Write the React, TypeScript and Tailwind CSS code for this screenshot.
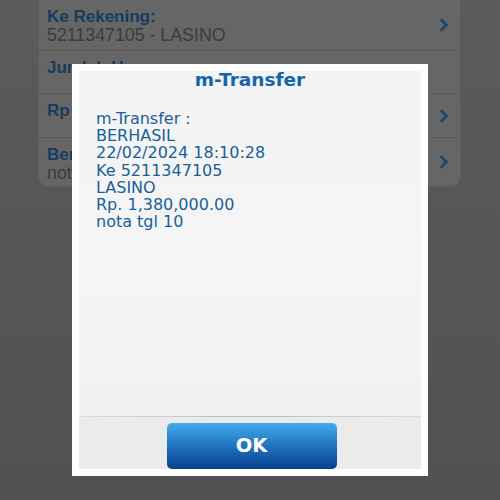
import { ChevronRight } from "lucide-react";

const rows = [
    { label: "Ke Rekening:", value: "5211347105 - LASINO", h: "h-[50px]", arrow: true },
    { label: "Jumlah Uang:", value: "", h: "h-[43px]", arrow: false },
    { label: "Rp", value: "", h: "h-[44px]", arrow: true },
    { label: "Berita:", value: "nota tgl 10", h: "h-[49px]", arrow: true },
];

const lines = [
    "m-Transfer :",
    "BERHASIL",
    "22/02/2024 18:10:28",
    "Ke 5211347105",
    "LASINO",
    "Rp. 1,380,000.00",
    "nota tgl 10",
];

export default function App() {
    return (
        <div className="relative w-[500px] h-[500px] overflow-hidden bg-gradient-to-b from-[#5b5b5b] to-[#515151] font-['Liberation_Sans',sans-serif]">
            {/* form behind the dialog */}
            <div className="ml-[38px] w-[423px] bg-[#666666] rounded-b-[10px] border-x border-b border-[#5e5e5e]">
                {rows.map((r, i) => (
                    <div
                        key={i}
                        className={`${r.h} flex items-center justify-between pl-[8px] pr-[6px] ${i > 0 ? "border-t border-[#5a5a5a]" : ""}`}
                    >
                        <div className="self-start flex flex-col leading-[19px] pt-[7px]">
                            <span className="text-[17px] font-bold text-[#163c5e]">{r.label}</span>
                            {r.value && <span className="text-[17.8px] text-[#3c3c3c]">{r.value}</span>}
                        </div>
                        {r.arrow && <ChevronRight size={20} strokeWidth={3.5} className="text-[#1b4a70]" />}
                    </div>
                ))}
            </div>

            {/* dialog */}
            <div className="absolute left-[72px] top-[64px] w-[356px] h-[412px] bg-white p-[7px]">
                <div className="h-full flex flex-col bg-gradient-to-b from-[#f3f3f3] via-[#f5f5f5] to-[#efefef] font-['DejaVu_Sans',sans-serif]">
                    <div className="h-[30px] flex justify-center">
                        <span className="text-[18.5px] font-bold text-[#1466a6] leading-[18px]">m-Transfer</span>
                    </div>
                    <div className="flex-1 pl-[17px] pt-[9px] flex flex-col">
                        {lines.map((l, i) => (
                            <span key={i} className="text-[16px] leading-[17.2px] text-[#1a5f9a]">{l}</span>
                        ))}
                    </div>
                    <div className="h-px bg-gradient-to-r from-[#dcdcdc] via-[#b9b9b9] to-[#dcdcdc]" />
                    <div className="h-[52px] flex justify-center items-end bg-[#ebebeb]">
                        <button className="w-[170px] h-[46px] ml-[3px] rounded-[5px] bg-gradient-to-b from-[#43aaec] to-[#063f8f] text-white text-[19.5px] font-bold">
                            OK
                        </button>
                    </div>
                </div>
            </div>
        </div>
    );
}
